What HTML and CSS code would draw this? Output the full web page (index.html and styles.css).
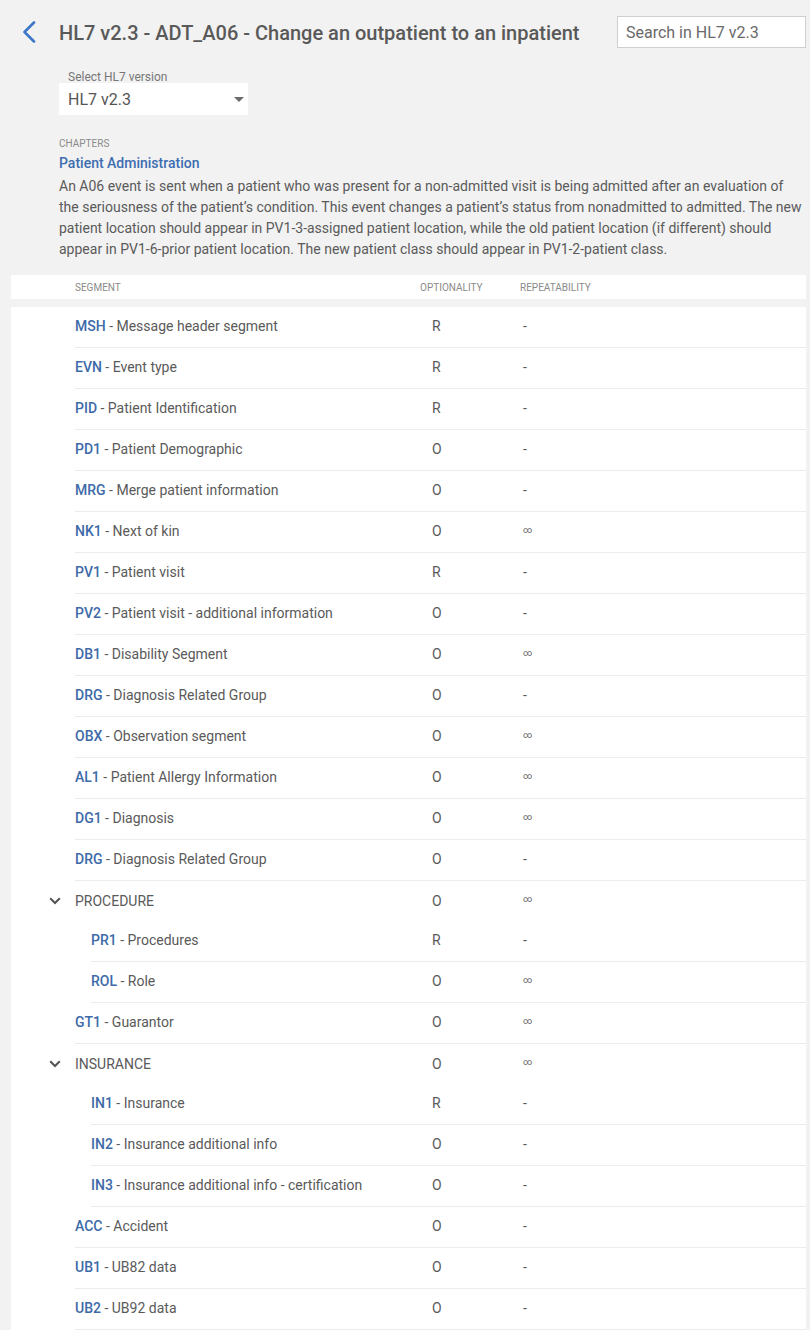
FILE: index.html
```html
<!DOCTYPE html>
<html lang="en">
<head>
<meta charset="utf-8">
<title>HL7 v2.3 - ADT_A06</title>
<link rel="stylesheet" href="styles.css">
</head>
<body>
<header class="topbar">
  <a class="back" href="#" aria-label="Back">
    <svg width="14" height="22" viewBox="0 0 14 22"><path d="M12 1.5 L2.5 11 L12 20.5" fill="none" stroke="#3b78c8" stroke-width="2.6" stroke-linecap="round" stroke-linejoin="round"/></svg>
  </a>
  <h1 class="title">HL7 v2.3 - ADT_A06 - Change an outpatient to an inpatient</h1>
  <div class="search">Search in HL7 v2.3</div>
</header>

<section class="intro">
  <div class="version">
    <div class="version-label">Select HL7 version</div>
    <div class="select">
      <span>HL7 v2.3</span>
      <svg width="10" height="5" viewBox="0 0 10 5"><path d="M0 0 H10 L5 5 Z" fill="#6b6b6b"/></svg>
    </div>
  </div>
  <div class="chapters-label">CHAPTERS</div>
  <div class="chapter">Patient Administration</div>
  <p class="desc">An A06 event is sent when a patient who was present for a non-admitted visit is being admitted after an evaluation of the seriousness of the patient’s condition. This event changes a patient’s status from nonadmitted to admitted. The new patient location should appear in PV1-3-assigned patient location, while the old patient location (if different) should appear in PV1-6-prior patient location. The new patient class should appear in PV1-2-patient class.</p>
</section>

<div class="thead">
  <div class="th th-seg">SEGMENT</div>
  <div class="th th-opt">OPTIONALITY</div>
  <div class="th th-rep">REPEATABILITY</div>
</div>

<div class="tbody">
  <div class="row"><div class="gutter"></div><div class="cells"><div class="seg"><b>MSH</b> - Message header segment</div><div class="opt">R</div><div class="rep">-</div></div></div>
  <div class="row"><div class="gutter"></div><div class="cells"><div class="seg"><b>EVN</b> - Event type</div><div class="opt">R</div><div class="rep">-</div></div></div>
  <div class="row"><div class="gutter"></div><div class="cells"><div class="seg"><b>PID</b> - Patient Identification</div><div class="opt">R</div><div class="rep">-</div></div></div>
  <div class="row"><div class="gutter"></div><div class="cells"><div class="seg"><b>PD1</b> - Patient Demographic</div><div class="opt">O</div><div class="rep">-</div></div></div>
  <div class="row"><div class="gutter"></div><div class="cells"><div class="seg"><b>MRG</b> - Merge patient information</div><div class="opt">O</div><div class="rep">-</div></div></div>
  <div class="row"><div class="gutter"></div><div class="cells"><div class="seg"><b>NK1</b> - Next of kin</div><div class="opt">O</div><div class="rep inf">∞</div></div></div>
  <div class="row"><div class="gutter"></div><div class="cells"><div class="seg"><b>PV1</b> - Patient visit</div><div class="opt">R</div><div class="rep">-</div></div></div>
  <div class="row"><div class="gutter"></div><div class="cells"><div class="seg"><b>PV2</b> - Patient visit - additional information</div><div class="opt">O</div><div class="rep">-</div></div></div>
  <div class="row"><div class="gutter"></div><div class="cells"><div class="seg"><b>DB1</b> - Disability Segment</div><div class="opt">O</div><div class="rep inf">∞</div></div></div>
  <div class="row"><div class="gutter"></div><div class="cells"><div class="seg"><b>DRG</b> - Diagnosis Related Group</div><div class="opt">O</div><div class="rep">-</div></div></div>
  <div class="row"><div class="gutter"></div><div class="cells"><div class="seg"><b>OBX</b> - Observation segment</div><div class="opt">O</div><div class="rep inf">∞</div></div></div>
  <div class="row"><div class="gutter"></div><div class="cells"><div class="seg"><b>AL1</b> - Patient Allergy Information</div><div class="opt">O</div><div class="rep inf">∞</div></div></div>
  <div class="row"><div class="gutter"></div><div class="cells"><div class="seg"><b>DG1</b> - Diagnosis</div><div class="opt">O</div><div class="rep inf">∞</div></div></div>
  <div class="row"><div class="gutter"></div><div class="cells"><div class="seg"><b>DRG</b> - Diagnosis Related Group</div><div class="opt">O</div><div class="rep">-</div></div></div>
  <div class="row group"><div class="gutter"><svg class="chev" width="12" height="8" viewBox="0 0 12 8"><path d="M1.2 1.2 L6 6 L10.8 1.2" fill="none" stroke="#555" stroke-width="2"/></svg></div><div class="cells"><div class="seg">PROCEDURE</div><div class="opt">O</div><div class="rep inf">∞</div></div></div>
  <div class="row nested"><div class="gutter"></div><div class="cells"><div class="seg"><b>PR1</b> - Procedures</div><div class="opt">R</div><div class="rep">-</div></div></div>
  <div class="row nested"><div class="gutter"></div><div class="cells"><div class="seg"><b>ROL</b> - Role</div><div class="opt">O</div><div class="rep inf">∞</div></div></div>
  <div class="row"><div class="gutter"></div><div class="cells"><div class="seg"><b>GT1</b> - Guarantor</div><div class="opt">O</div><div class="rep inf">∞</div></div></div>
  <div class="row group"><div class="gutter"><svg class="chev" width="12" height="8" viewBox="0 0 12 8"><path d="M1.2 1.2 L6 6 L10.8 1.2" fill="none" stroke="#555" stroke-width="2"/></svg></div><div class="cells"><div class="seg">INSURANCE</div><div class="opt">O</div><div class="rep inf">∞</div></div></div>
  <div class="row nested"><div class="gutter"></div><div class="cells"><div class="seg"><b>IN1</b> - Insurance</div><div class="opt">R</div><div class="rep">-</div></div></div>
  <div class="row nested"><div class="gutter"></div><div class="cells"><div class="seg"><b>IN2</b> - Insurance additional info</div><div class="opt">O</div><div class="rep">-</div></div></div>
  <div class="row nested"><div class="gutter"></div><div class="cells"><div class="seg"><b>IN3</b> - Insurance additional info - certification</div><div class="opt">O</div><div class="rep">-</div></div></div>
  <div class="row"><div class="gutter"></div><div class="cells"><div class="seg"><b>ACC</b> - Accident</div><div class="opt">O</div><div class="rep">-</div></div></div>
  <div class="row"><div class="gutter"></div><div class="cells"><div class="seg"><b>UB1</b> - UB82 data</div><div class="opt">O</div><div class="rep">-</div></div></div>
  <div class="row"><div class="gutter"></div><div class="cells"><div class="seg"><b>UB2</b> - UB92 data</div><div class="opt">O</div><div class="rep">-</div></div></div>
</div>
</body>
</html>
```
FILE: styles.css
```css
* { box-sizing: border-box; }
html, body { margin: 0; padding: 0; }
body {
  background: #f2f2f2;
  font-family: Roboto, "Noto Sans", sans-serif;
  color: #5a5a5a;
  width: 810px;
  overflow: hidden;
}
.topbar {
  display: flex;
  align-items: center;
  height: 32px;
  margin-top: 16px;
  padding-right: 4px;
}
.back {
  display: flex;
  width: 59px;
  padding-left: 22px;
}
.title {
  margin: 0;
  font-size: 20px;
  font-weight: 500;
  color: #595959;
  flex: 1;
  white-space: nowrap;
  padding-top: 2px;
}
.search {
  width: 189px;
  height: 32px;
  background: #fff;
  border: 1px solid #cfcfcf;
  font-size: 16px;
  color: #6a6a6a;
  padding: 0 8px;
  line-height: 31px;
}
.intro {
  padding: 0 4px 0 59px;
}
.version { margin-top: 21px; }
.version-label {
  font-size: 12px;
  line-height: 14px;
  color: #777;
  padding-left: 9px;
  padding-top: 1px;
  margin-bottom: -1px;
}
.select {
  width: 189px;
  height: 32px;
  background: #fff;
  display: flex;
  align-items: center;
  justify-content: space-between;
  padding: 0 4px 0 9px;
  font-size: 16px;
  color: #555;
}
.chapters-label {
  margin-top: 22px;
  font-size: 10px;
  line-height: 14px;
  color: #8a8a8a;
}
.chapter {
  margin-top: 2px;
  font-size: 14px;
  line-height: 20px;
  font-weight: 500;
  color: #3d6db0;
}
.desc {
  margin: 3px 0 0;
  font-size: 14px;
  line-height: 21px;
  color: #5a5a5a;
}
.thead {
  margin: 15px 4px 0 11px;
  height: 24px;
  background: #fff;
  display: flex;
  align-items: center;
  font-size: 10px;
  color: #8a8a8a;
}
.th-seg { padding-left: 64px; width: 409px; }
.th-opt { width: 100px; }
.tbody {
  margin: 8px 4px 0 11px;
  background: #fff;
}
.row {
  display: flex;
  height: 41px;
}
.row.group { height: 40px; }
.gutter {
  width: 64px;
  flex: none;
  display: flex;
  align-items: center;
  padding-left: 38px;
}
.row.nested .gutter { width: 80px; }
.cells {
  flex: 1;
  display: flex;
  align-items: center;
  border-bottom: 1px solid #ececec;
  font-size: 14px;
  color: #5a5a5a;
  padding-bottom: 2px;
}
.row.group .cells { border-bottom: none; padding-bottom: 1px; }
.seg { width: 345px; flex: none; }
.row.nested .seg { width: 329px; }
.seg b { font-weight: 500; color: #3d6aa8; }
.opt { width: 100px; flex: none; padding-left: 12px; }
.rep { padding-left: 3px; }
.rep.inf { font-size: 9px; padding-left: 3px; color: #666; padding-bottom: 3px; }
```
